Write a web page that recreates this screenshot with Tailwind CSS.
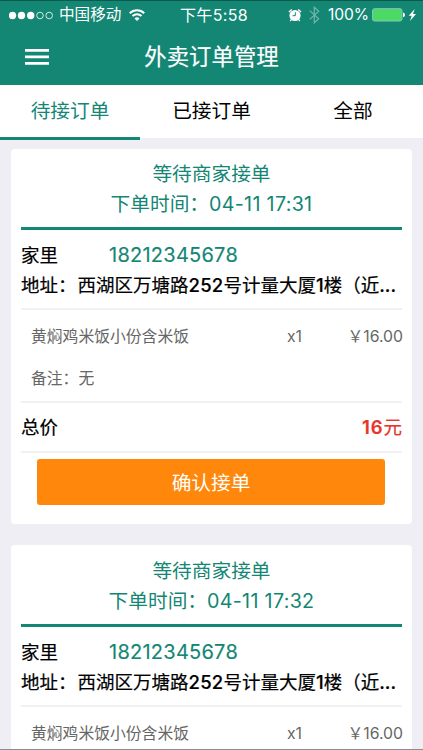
<!DOCTYPE html>
<html lang="zh-CN">
<head>
<meta charset="UTF-8">
<meta name="viewport" content="width=device-width, initial-scale=1">
<title>外卖订单管理</title>
<script src="https://cdn.jsdelivr.net/npm/@tailwindcss/browser@4"></script>
</head>
<body class="h-[750px] overflow-hidden bg-[#efeef4] font-['Inter','Noto_Sans_CJK_SC',sans-serif] whitespace-nowrap text-black">
<div class="relative flex h-[750px] flex-col overflow-hidden border-b border-[#8c8c90]">
  <header class="h-[85px] shrink-0 border-t border-[#0b5a4d] bg-[#138674] text-white">
    <div class="flex h-7 items-center pl-[9px] text-[15.6px]">
      <svg class="h-[9px] w-[46px] shrink-0" viewBox="0 0 46 9" fill="none" stroke="white">
        <g fill="white" stroke="none"><circle cx="3.5" cy="4.5" r="3.7"/><circle cx="12.5" cy="4.5" r="3.7"/><circle cx="21.7" cy="4.5" r="3.7"/></g>
        <g stroke-width=".8"><circle cx="31" cy="4.5" r="3.3"/><circle cx="40.2" cy="4.5" r="3.3"/></g>
      </svg>
      <span class="ml-1 w-[70px]">中国移动</span>
      <svg class="h-3 w-4 shrink-0" viewBox="0 0 16 12" fill="none" stroke="white" stroke-width="2">
        <path d="M.8 4.2a10.3 10.3 0 0 1 14.4 0M3.5 7a6.4 6.4 0 0 1 9 0"/><path d="M8 12 5.5 9.5a3.6 3.6 0 0 1 5 0z" fill="white" stroke="none"/>
      </svg>
      <span class="ml-[35px] w-[108px] text-[16px] tracking-[.35px]">下午5:58</span>
      <svg class="h-[14px] w-[14px] shrink-0" viewBox="0 0 14 14">
        <circle cx="7" cy="7.5" r="5.6" fill="white"/><path d="M.9 4.1 3.8 1.4M10.2 1.4l2.9 2.7M3.2 11.8l-1 1.2M10.8 11.8l1 1.2" stroke="white" stroke-width="1.4"/><path d="M7.3 4.2v3.5H4.6" fill="none" stroke="#138674" stroke-width="1"/>
      </svg>
      <svg class="ml-[7px] h-[18px] w-[11px] shrink-0" viewBox="0 0 11 18" fill="none" stroke="#71b7aa" stroke-width="1.2">
        <path d="m.7 4.6 9 8.2-4.4 4V1.2l4.4 4-9 8.2"/>
      </svg>
      <span class="ml-[8px] w-[44px] text-[15.6px] tracking-[-.1px]">100%</span>
      <svg class="h-[14px] w-[46px] shrink-0" viewBox="0 0 46 14">
        <rect x=".5" y=".7" width="29.5" height="12.3" rx="2" fill="#4cd964" stroke="#7fc9b9"/><path d="M31 4.6q2 .4 2 2.3t-2 2.3z" fill="white"/><path d="m42.7 1-6 6.7h3l-1.7 5.2 6-6.9h-3z" fill="white"/>
      </svg>
    </div>
    <div class="grid h-[55px] grid-cols-[140px_1fr_140px] items-center">
      <svg class="ml-[25px] h-[18px] w-6" viewBox="0 0 24 18" fill="white"><path d="M0 1h24v2.8H0zM0 7.5h24v2.8H0zM0 14h24v2.8H0z"/></svg>
      <h1 class="text-center text-[22.4px] leading-8 [-webkit-text-stroke:.2px_white]">外卖订单管理</h1>
    </div>
  </header>
  <nav class="grid h-[53px] shrink-0 grid-cols-[140px_143px_140px] bg-white text-center text-[19.7px] leading-[52px]">
    <a class="border-b-[3px] border-[#138674] text-[#138674]">待接订单</a>
    <a>已接订单</a>
    <a>全部</a>
  </nav>

  <main class="flex flex-col gap-[21px] pt-[11px] pr-[11px] pl-[11px]">
    <article class="h-[375px] shrink-0 rounded-[4px] bg-white px-[10px] pt-[10px]">
      <div class="h-[71px] border-b-[3px] border-[#138674] text-center text-[19.7px] leading-[30px] text-[#138674]">
        <p>等待商家接单</p>
        <p>下单时间：<span class="tracking-[.3px]">04-11 17:31</span></p>
      </div>
      <div class="h-[80px] border-b-2 border-[#f1f1f3] pt-[10px] text-[18.5px] leading-[30px]">
        <p class="flex"><span class="w-[88px] [-webkit-text-stroke:.2px_black]">家里</span><span class="text-[20px] tracking-[.25px] text-[#138674] [-webkit-text-stroke:.15px_#138674]">18212345678</span></p>
        <p class="[-webkit-text-stroke:.2px_black]">地址：<span class="ml-px">西湖区万塘路</span><span class="font-medium tracking-[.25px]">252</span>号计量大厦<span class="font-medium">1</span>楼（近<span class="font-medium">...</span></p>
      </div>
      <div class="h-[93px] border-b-2 border-[#f1f1f3] pt-[12px] text-[15.8px] leading-[30px] text-[#666]">
        <p class="flex pl-[10px]"><span class="w-[256px]">黄焖鸡米饭小份含米饭</span><span>x1</span><span class="-mr-px ml-auto">￥16.00</span></p>
        <p class="mt-[12px] pl-[10px]">备注：无</p>
      </div>
      <div class="flex h-[50px] justify-between border-b-2 border-[#f1f1f3] text-[18.5px] leading-[48px]">
        <span class="[-webkit-text-stroke:.2px_black]">总价</span>
        <span class="text-[#e7352c] [-webkit-text-stroke:.2px_#e7352c]"><b class="font-semibold tracking-[.9px]">16</b>元</span>
      </div>
      <button class="mt-[6px] ml-[16px] block h-[46px] w-[348px] rounded-[3px] bg-[#ff870b] pt-[3px] text-center text-[19.7px] text-white">确认接单</button>
    </article>

    <article class="h-[375px] shrink-0 rounded-[4px] bg-white px-[10px] pt-[11px]">
      <div class="h-[71px] border-b-[3px] border-[#138674] text-center text-[19.7px] leading-[30px] text-[#138674]">
        <p>等待商家接单</p>
        <p>下单时间：<span class="tracking-[.3px]">04-11 17:32</span></p>
      </div>
      <div class="h-[80px] border-b-2 border-[#f1f1f3] pt-[10px] text-[18.5px] leading-[30px]">
        <p class="flex"><span class="w-[88px] [-webkit-text-stroke:.2px_black]">家里</span><span class="text-[20px] tracking-[.25px] text-[#138674] [-webkit-text-stroke:.15px_#138674]">18212345678</span></p>
        <p class="[-webkit-text-stroke:.2px_black]">地址：<span class="ml-px">西湖区万塘路</span><span class="font-medium tracking-[.25px]">252</span>号计量大厦<span class="font-medium">1</span>楼（近<span class="font-medium">...</span></p>
      </div>
      <div class="pt-[12px] text-[15.8px] leading-[30px] text-[#666]">
        <p class="flex pl-[10px]"><span class="w-[256px]">黄焖鸡米饭小份含米饭</span><span>x1</span><span class="-mr-px ml-auto">￥16.00</span></p>
      </div>
    </article>
  </main>
</div>
</body>
</html>
